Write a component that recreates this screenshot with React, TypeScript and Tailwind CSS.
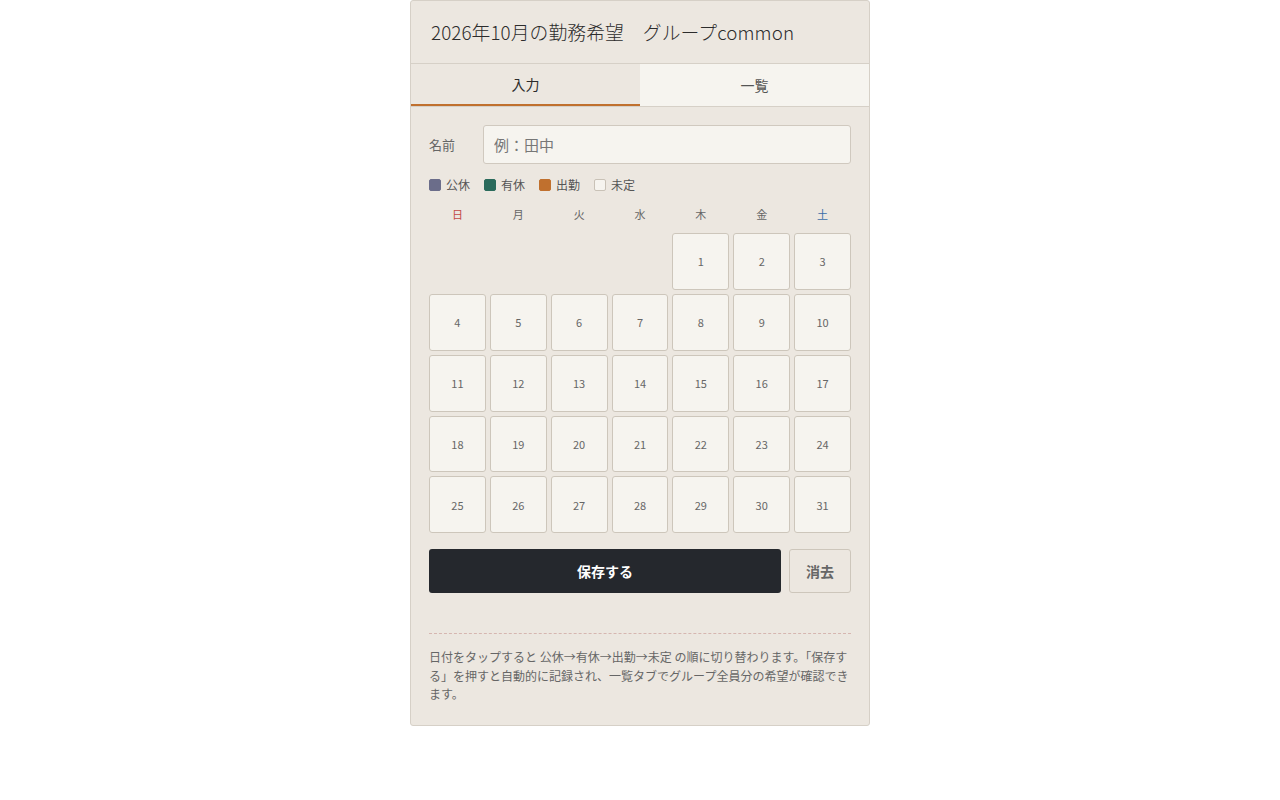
import { useState } from "react";

const FONT = { fontFamily: '"Noto Sans CJK JP", "Noto Sans", sans-serif' };

const weekdays = ["日", "月", "火", "水", "木", "金", "土"];

const legend = [
  { label: "公休", cls: "bg-[#6b6d8a] border-[#6b6d8a]" },
  { label: "有休", cls: "bg-[#2b6b5c] border-[#2b6b5c]" },
  { label: "出勤", cls: "bg-[#c0702e] border-[#c0702e]" },
  { label: "未定", cls: "bg-[#f6f4ef] border-[#c9c2b7]" },
];

export default function App() {
  const [tab, setTab] = useState<"input" | "list">("input");
  const [name, setName] = useState("");

  // October 2026 starts on Thursday
  const cells: (number | null)[] = [null, null, null, null];
  for (let d = 1; d <= 31; d++) cells.push(d);

  return (
    <div className="min-h-screen bg-white" style={FONT}>
      <div className="mx-auto w-[460px] rounded-[3px] border border-[#d6d0c7] bg-[#ece7e0]">
        {/* Header */}
        <div className="flex h-[63px] items-center border-b border-[#d6d0c7] px-5">
          <h1 className="text-[18.8px] font-light tracking-[0.005em] text-[#2c2c2c]">
            2026年10月の勤務希望　グループcommon
          </h1>
        </div>

        {/* Tabs */}
        <div className="flex h-[43px] border-b border-[#d6d0c7]">
          <button
            onClick={() => setTab("input")}
            className={`flex-1 text-sm ${
              tab === "input"
                ? "border-b-2 border-[#c0702e] bg-[#ece7e0] text-[#2c2c2c]"
                : "bg-[#f6f4ef] text-[#555]"
            }`}
          >
            入力
          </button>
          <button
            onClick={() => setTab("list")}
            className={`flex-1 text-sm ${
              tab === "list"
                ? "border-b-2 border-[#c0702e] bg-[#ece7e0] text-[#2c2c2c]"
                : "bg-[#f6f4ef] text-[#555]"
            }`}
          >
            一覧
          </button>
        </div>

        {/* Body */}
        <div className="px-[18px] pb-[21px] pt-[18px]">
          <div className="flex items-center">
            <label className="w-[54px] text-[13px] text-[#666]">名前</label>
            <input
              value={name}
              onChange={(e) => setName(e.target.value)}
              placeholder="例：田中"
              className="h-[39px] flex-1 rounded-[3px] border border-[#d0c9bf] bg-[#f6f4ef] px-2.5 text-[15px] text-[#333] outline-none placeholder:text-[#777]"
            />
          </div>

          <div className="mt-[13px] flex items-center gap-[14px] text-xs text-[#555]">
            {legend.map((l) => (
              <div key={l.label} className="flex items-center gap-[5px]">
                <span className={`h-3 w-3 rounded-[2px] border ${l.cls}`} />
                <span>{l.label}</span>
              </div>
            ))}
          </div>

          <div className="mt-[14px] grid grid-cols-7 gap-1">
            {weekdays.map((w, i) => (
              <div
                key={w}
                className={`h-[14px] text-center text-[11px] leading-[14px] ${
                  i === 0 ? "text-[#c24a45]" : i === 6 ? "text-[#3b6ea8]" : "text-[#666]"
                }`}
              >
                {w}
              </div>
            ))}
          </div>

          <div className="mt-[12px] grid grid-cols-7 gap-1">
            {cells.map((d, i) =>
              d === null ? (
                <div key={`e${i}`} className="aspect-square" />
              ) : (
                <button
                  key={d}
                  className="flex aspect-square items-center justify-center rounded-[3px] border border-[#cdc6bb] bg-[#f6f4ef] text-[11px] text-[#666]"
                >
                  {d}
                </button>
              )
            )}
          </div>

          <div className="mt-4 flex gap-2">
            <button className="h-11 flex-1 rounded-[3px] bg-[#25282d] text-sm font-bold text-white">
              保存する
            </button>
            <button className="h-11 w-[62px] rounded-[3px] border border-[#cdc6bb] bg-[#ece7e0] text-sm font-bold text-[#666]">
              消去
            </button>
          </div>

          <div className="mt-10 border-t border-dashed border-[#d6b6b0] pt-[14px]">
            <p className="text-xs leading-[18.5px] text-[#666]">
              日付をタップすると 公休→有休→出勤→未定 の順に切り替わります。「保存する」を押すと自動的に記録され、一覧タブでグループ全員分の希望が確認できます。
            </p>
          </div>
        </div>
      </div>
    </div>
  );
}
